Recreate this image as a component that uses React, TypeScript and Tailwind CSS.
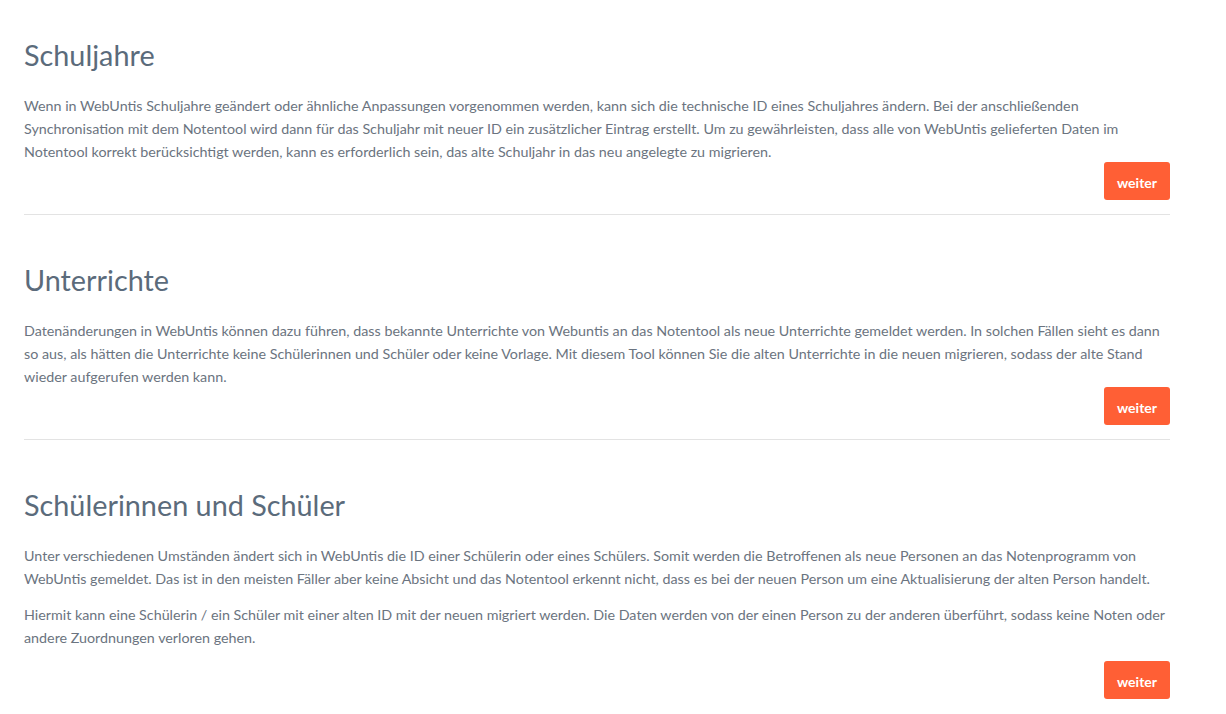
export default function App() {
  return (
    <div className="min-h-screen bg-white" style={{ fontFamily: 'Lato, "Open Sans", sans-serif' }}>
      <div className="ml-6 w-[1146px]">
        <section className="pt-[38px]">
          <h2 className="mb-[22px] text-[28.8px] leading-[34px] font-normal text-[#5b6b7b]">Schuljahre</h2>
          <div className="text-[14.3px] leading-[23px] text-[#6b7480]">
            Wenn in WebUntis Schuljahre geändert oder ähnliche Anpassungen vorgenommen werden, kann sich die technische ID eines Schuljahres ändern. Bei der anschließenden Synchronisation mit dem Notentool wird dann für das Schuljahr mit neuer ID ein zusätzlicher Eintrag erstellt. Um zu gewährleisten, dass alle von WebUntis gelieferten Daten im Notentool korrekt berücksichtigt werden, kann es erforderlich sein, das alte Schuljahr in das neu angelegte zu migrieren.
          </div>
          <div className="-mt-px flex justify-end">
            <button className="h-[38px] w-[66px] rounded-[3px] bg-[#ff5f35] pt-[2px] text-[14px] font-bold text-white">weiter</button>
          </div>
          <hr className="mt-[14px] mb-12 border-t border-[#e3e3e3]" />
        </section>

        <section>
          <h2 className="mb-[22px] text-[28.8px] leading-[34px] font-normal text-[#5b6b7b]">Unterrichte</h2>
          <div className="text-[14.3px] leading-[23px] text-[#6b7480]">
            Datenänderungen in WebUntis können dazu führen, dass bekannte Unterrichte von Webuntis an das Notentool als neue Unterrichte gemeldet werden. In solchen Fällen sieht es dann so aus, als hätten die Unterrichte keine Schülerinnen und Schüler oder keine Vorlage. Mit diesem Tool können Sie die alten Unterrichte in die neuen migrieren, sodass der alte Stand wieder aufgerufen werden kann.
          </div>
          <div className="-mt-px flex justify-end">
            <button className="h-[38px] w-[66px] rounded-[3px] bg-[#ff5f35] pt-[2px] text-[14px] font-bold text-white">weiter</button>
          </div>
          <hr className="mt-[14px] mb-12 border-t border-[#e3e3e3]" />
        </section>

        <section>
          <h2 className="mb-[22px] text-[28.8px] leading-[34px] font-normal text-[#5b6b7b]">Schülerinnen und Schüler</h2>
          <p className="mb-[13px] text-[14.3px] leading-[23px] text-[#6b7480]">
            Unter verschiedenen Umständen ändert sich in WebUntis die ID einer Schülerin oder eines Schülers. Somit werden die Betroffenen als neue Personen an das Notenprogramm von WebUntis gemeldet. Das ist in den meisten Fäller aber keine Absicht und das Notentool erkennt nicht, dass es bei der neuen Person um eine Aktualisierung der alten Person handelt.
          </p>
          <p className="mb-3 text-[14.3px] leading-[23px] text-[#6b7480]">
            Hiermit kann eine Schülerin / ein Schüler mit einer alten ID mit der neuen migriert werden. Die Daten werden von der einen Person zu der anderen überführt, sodass keine Noten oder andere Zuordnungen verloren gehen.
          </p>
          <div className="flex justify-end">
            <button className="h-[38px] w-[66px] rounded-[3px] bg-[#ff5f35] pt-[2px] text-[14px] font-bold text-white">weiter</button>
          </div>
        </section>
      </div>
    </div>
  );
}
